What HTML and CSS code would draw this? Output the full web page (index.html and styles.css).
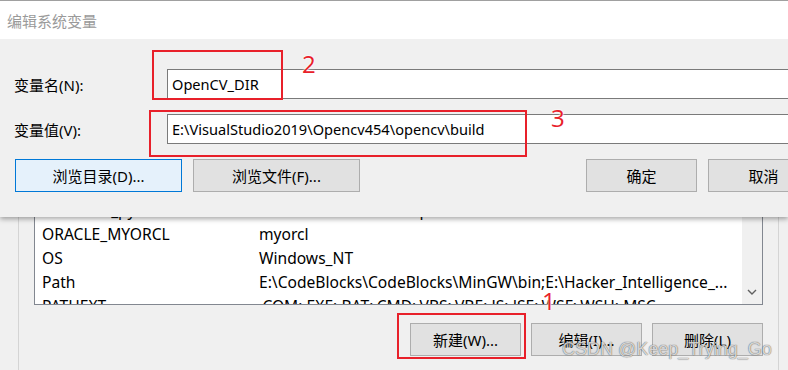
FILE: index.html
```html
<!DOCTYPE html>
<html lang="zh-CN">
<head>
<meta charset="utf-8">
<title>编辑系统变量</title>
<link rel="stylesheet" href="styles.css">
</head>
<body>
<div class="screen">
  <div class="bgwin">
    <div class="bgwin-inner">
      <div class="list">
        <div class="rows">
          <div class="row"><span class="c1">OneDrive_py</span><span class="c2">C:\Users\...\OneDrive\p</span></div>
          <div class="row"><span class="c1">ORACLE_MYORCL</span><span class="c2">myorcl</span></div>
          <div class="row"><span class="c1">OS</span><span class="c2">Windows_NT</span></div>
          <div class="row"><span class="c1">Path</span><span class="c2">E:\CodeBlocks\CodeBlocks\MinGW\bin;E:\Hacker_Intelligence_...</span></div>
          <div class="row"><span class="c1">PATHEXT</span><span class="c2">.COM;.EXE;.BAT;.CMD;.VBS;.VBE;.JS;.JSE;.WSF;.WSH;.MSC</span></div>
        </div>
        <div class="vscroll">
          <svg class="chev" width="10" height="6" viewBox="0 0 10 6"><path d="M1 1 L5 5 L9 1" fill="none" stroke="#606060" stroke-width="1.4"/></svg>
        </div>
      </div>
      <div class="btnrow">
        <button class="btn small">新建(W)...</button>
        <button class="btn small">编辑(I)...</button>
        <button class="btn small">删除(L)</button>
      </div>
    </div>
  </div>

  <div class="dialog">
    <div class="titlebar"><span class="title">编辑系统变量</span></div>
    <div class="dbody">
      <div class="field">
        <label class="flabel">变量名(N):</label>
        <div class="input">OpenCV_DIR</div>
      </div>
      <div class="field">
        <label class="flabel">变量值(V):</label>
        <div class="input">E:\VisualStudio2019\Opencv454\opencv\build</div>
      </div>
      <div class="dbtns">
        <button class="btn wide focus">浏览目录(D)...</button>
        <button class="btn wide">浏览文件(F)...</button>
        <span class="spacer"></span>
        <button class="btn small">确定</button>
        <button class="btn small">取消</button>
      </div>
    </div>
  </div>

  <div class="mark box2"></div>
  <div class="mark box3"></div>
  <div class="mark box1"></div>
  <span class="num n2">2</span>
  <span class="num n3">3</span>
  <span class="num n1">1</span>
  <span class="watermark">CSDN @Keep_Trying_Go</span>
</div>
</body>
</html>
```

FILE: styles.css
```css
* { box-sizing: border-box; }
html, body { margin: 0; padding: 0; }
body {
  width: 788px;
  height: 370px;
  overflow: hidden;
  background: #f0f0f0;
  font-family: "Noto Sans", "Noto Sans CJK SC", sans-serif;
  font-size: 15px;
  color: #000;
}
.screen {
  position: relative;
  width: 788px;
  height: 370px;
  overflow: hidden;
}

/* background window */
.bgwin {
  height: 370px;
  padding-left: 18px;
}
.bgwin-inner {
  width: 761px;
  height: 370px;
  border-left: 1px solid #d4d4d4;
  border-right: 1px solid #d4d4d4;
  padding: 196px 0 0 15px;
}
.list {
  width: 729px;
  height: 109px;
  border: 1px solid #828790;
  background: #fff;
  display: flex;
  overflow: hidden;
}
.rows {
  flex: 1;
  padding-top: 1px;
  font-size: 15.6px;
}
.row {
  display: flex;
  height: 24px;
  align-items: center;
  white-space: nowrap;
  overflow: hidden;
}
.c1 { width: 224px; padding-left: 7px; flex: none; }
.c2 { flex: none; }
.vscroll {
  width: 20px;
  flex: none;
  background: #f0f0f0;
  display: flex;
  align-items: flex-end;
  justify-content: center;
  padding-bottom: 9px;
}
.btnrow {
  display: flex;
  justify-content: flex-end;
  gap: 10px;
  width: 729px;
  margin-top: 18px;
}

.btn {
  height: 33px;
  border: 1px solid #adadad;
  background: #e1e1e1;
  font: inherit;
  font-size: 15px;
  color: #000;
  padding: 0;
  flex: none;
}
.btn.small { width: 111px; }
.btn.wide { width: 167px; }
.btn.focus { background: #e5f1fb; border-color: #0078d7; }

/* front dialog */
.dialog {
  position: absolute;
  left: 0;
  top: 0;
  width: 788px;
  height: 217px;
  background: #f0f0f0;
  box-shadow: 0 2px 5px rgba(0,0,0,0.35);
  overflow: hidden;
}
.titlebar {
  height: 39px;
  background: #fff;
  border-top: 1px solid #a0a0a0;
  display: flex;
  align-items: center;
  padding-left: 7px;
}
.title {
  font-size: 15px;
  color: #9a9a9a;
  font-family: "Noto Sans CJK SC", sans-serif;
}
.dbody {
  padding: 30px 0 0 14px;
}
.field {
  display: flex;
  align-items: center;
  height: 30px;
  margin-bottom: 15px;
}
.flabel {
  width: 153px;
  flex: none;
  font-size: 15px;
}
.input {
  flex: none;
  width: 700px;
  height: 30px;
  border: 1px solid #7a7a7a;
  background: #fff;
  display: flex;
  align-items: center;
  padding-left: 4px;
  white-space: nowrap;
  font-size: 14.6px;
}
.dbtns {
  display: flex;
  gap: 11px;
  margin-top: 6px;
  margin-left: 1px;
  width: 900px;
}
.spacer { width: 204px; flex: none; }

/* annotations */
.mark {
  position: absolute;
  border: 2px solid #e8202a;
}
.box2 { left: 152px; top: 50px; width: 131px; height: 50px; }
.box3 { left: 149px; top: 110px; width: 378px; height: 47px; }
.box1 { left: 397px; top: 313px; width: 129px; height: 46px; }
.num {
  position: absolute;
  color: #e8202a;
  font-family: "Open Sans", sans-serif;
  font-size: 24px;
  line-height: 1;
  text-shadow: 0 0 2px #fff, 0 0 2px #fff;
}
.n2 { left: 302px; top: 52px; }
.n3 { left: 551px; top: 106px; }
.n1 { left: 542px; top: 289px; }
.watermark {
  position: absolute;
  left: 562px;
  top: 340px;
  font-family: "Liberation Sans", sans-serif;
  font-size: 18px;
  line-height: 1;
  color: rgba(255,255,255,0.75);
  text-shadow: 0 0 1px rgba(0,0,0,0.5), 0 0 1px rgba(0,0,0,0.4);
}
```
